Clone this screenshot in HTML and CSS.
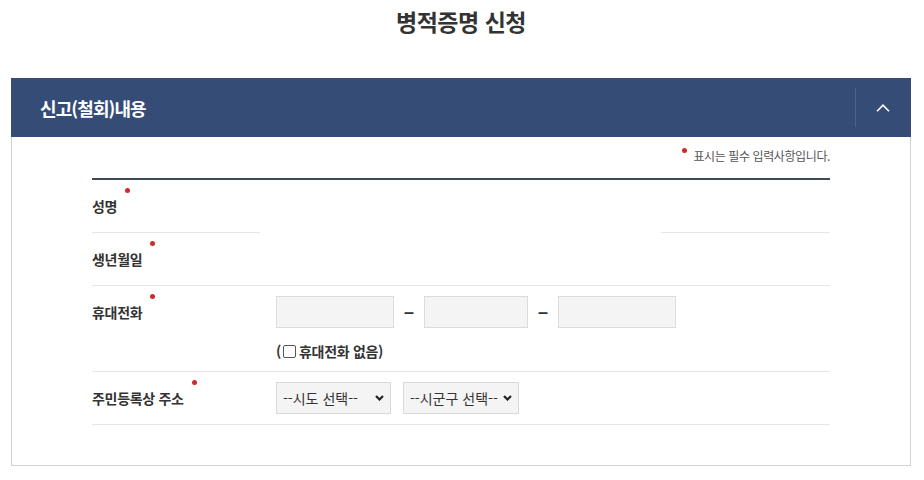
FILE: index.html
```html
<!DOCTYPE html>
<html lang="ko">
<head>
<meta charset="utf-8">
<title>병적증명 신청</title>
<link rel="stylesheet" href="styles.css">
</head>
<body>
<div class="page">
  <h1 class="page-title">병적증명 신청</h1>
  <section class="panel">
    <div class="panel-head">
      <h2 class="panel-title">신고(철회)내용</h2>
      <button class="toggle" type="button" aria-label="접기">
        <svg width="14" height="8" viewBox="0 0 14 8"><polyline points="1,7.2 7,1.2 13,7.2" fill="none" stroke="#ffffff" stroke-width="1.6"/></svg>
      </button>
    </div>
    <div class="panel-body">
      <p class="req-note"><span class="dot"></span>표시는 필수 입력사항입니다.</p>
      <div class="form">
        <div class="row row-partial">
          <div class="label"><span class="req">성명</span></div>
          <div class="field"></div>
          <div class="seg seg-left"></div>
          <div class="seg seg-right"></div>
        </div>
        <div class="row">
          <div class="label"><span class="req">생년월일</span></div>
          <div class="field"></div>
        </div>
        <div class="row">
          <div class="label"><span class="req">휴대전화</span></div>
          <div class="field">
            <div class="phone">
              <input class="inp w118" type="text">
              <span class="dash">–</span>
              <input class="inp w104" type="text">
              <span class="dash">–</span>
              <input class="inp w118" type="text">
            </div>
            <label class="nophone">(<input class="chk" type="checkbox">휴대전화 없음)</label>
          </div>
        </div>
        <div class="row">
          <div class="label"><span class="req">주민등록상 주소</span></div>
          <div class="field">
            <div class="selects">
              <select class="sel w115"><option>--시도 선택--</option></select>
              <select class="sel w116"><option>--시군구 선택--</option></select>
            </div>
          </div>
        </div>
      </div>
    </div>
  </section>
</div>
</body>
</html>
```

FILE: styles.css
```css
* { box-sizing: border-box; }
html, body { margin: 0; padding: 0; background: #ffffff; }
body {
  font-family: "Noto Sans CJK KR", "Noto Sans", sans-serif;
  color: #333333;
}
.page { padding: 0 13px 0 11px; }
.page-title {
  margin: 0;
  padding-top: 5px;
  height: 78px;
  text-align: center;
  font-size: 23px;
  line-height: 32px;
  font-weight: 700;
  letter-spacing: -0.5px;
  color: #333333;
}
.panel { width: 900px; }
.panel-head {
  height: 59px;
  background: #354d76;
  display: flex;
  align-items: center;
  justify-content: space-between;
  padding-left: 29px;
}
.panel-title {
  margin: 0;
  color: #ffffff;
  font-size: 18px;
  font-weight: 700;
  letter-spacing: -0.9px;
  line-height: 24px;
}
.toggle {
  width: 56px;
  height: 39px;
  border: 0;
  border-left: 1px solid #4d6286;
  background: transparent;
  padding: 0;
  display: flex;
  align-items: center;
  justify-content: center;
  padding-right: 2px;
}
.toggle svg { display: block; margin-top: 1px; }
.panel-body {
  border: 1px solid #d3d3d3;
  border-top: 0;
  padding: 0 80px 40px 80px;
}
.req-note {
  margin: 0;
  height: 41px;
  display: flex;
  justify-content: flex-end;
  align-items: flex-start;
  padding-top: 10px;
  font-size: 12px;
  line-height: 17px;
  letter-spacing: -0.4px;
  color: #555555;
}
.req-note .dot {
  width: 5px;
  height: 5px;
  border-radius: 50%;
  background: #cf2a2e;
  margin: 1px 6px 0 0;
}
.form { border-top: 2px solid #3d4a5e; }
.row {
  display: grid;
  grid-template-columns: 184px 1fr;
  border-bottom: 1px solid #e6e6e6;
}
.row-partial { border-bottom: 0; }
.row-partial .seg { height: 1px; background: #e6e6e6; }
.row-partial .seg-left { width: 168px; }
.row-partial .seg-right { width: 169px; justify-self: end; }
.label {
  padding: 10px 0;
  font-size: 14px;
  line-height: 32px;
  font-weight: 700;
  letter-spacing: -0.3px;
  color: #333333;
}
.req { position: relative; }
.req::after {
  content: "";
  position: absolute;
  right: -13px;
  top: -8px;
  width: 5px;
  height: 5px;
  border-radius: 50%;
  background: #cf2a2e;
}
.field { padding: 10px 0; min-height: 52px; }
.phone { display: flex; align-items: center; height: 32px; }
.inp {
  height: 32px;
  margin: 0;
  border: 1px solid #dcdcdc;
  background: #f4f4f4;
  padding: 0 6px;
  font: inherit;
}
.w118 { width: 118px; }
.w104 { width: 104px; }
.w115 { width: 115px; }
.w116 { width: 116px; }
.dash {
  width: 30px;
  text-align: center;
  font-family: "Liberation Sans", Arial, sans-serif;
  font-weight: 700;
  font-size: 18px;
  line-height: 32px;
  color: #333333;
}
.nophone {
  display: flex;
  align-items: center;
  margin-top: 13px;
  padding-bottom: 1px;
  height: 20px;
  font-size: 14px;
  line-height: 20px;
  font-weight: 700;
  letter-spacing: -0.3px;
  color: #333333;
}
.chk {
  appearance: none;
  -webkit-appearance: none;
  width: 13px;
  height: 13px;
  margin: 2px 3px 0 2px;
  border: 1px solid #555555;
  border-radius: 2px;
  background: #ffffff;
}
.selects { display: flex; gap: 12px; }
.sel {
  appearance: none;
  -webkit-appearance: none;
  height: 32px;
  margin: 0;
  border: 1px solid #d9d9d9;
  background-color: #f4f4f4;
  background-image: url("data:image/svg+xml;utf8,<svg xmlns='http://www.w3.org/2000/svg' width='9' height='6' viewBox='0 0 9 6'><polyline points='1,1 4.5,4.5 8,1' fill='none' stroke='%23222222' stroke-width='2.2'/></svg>");
  background-repeat: no-repeat;
  background-position: right 6px center;
  padding: 0 14px 0 6px;
  font-family: "Noto Sans CJK KR", sans-serif;
  font-size: 14px;
  color: #333333;
  border-radius: 0;
}
```
